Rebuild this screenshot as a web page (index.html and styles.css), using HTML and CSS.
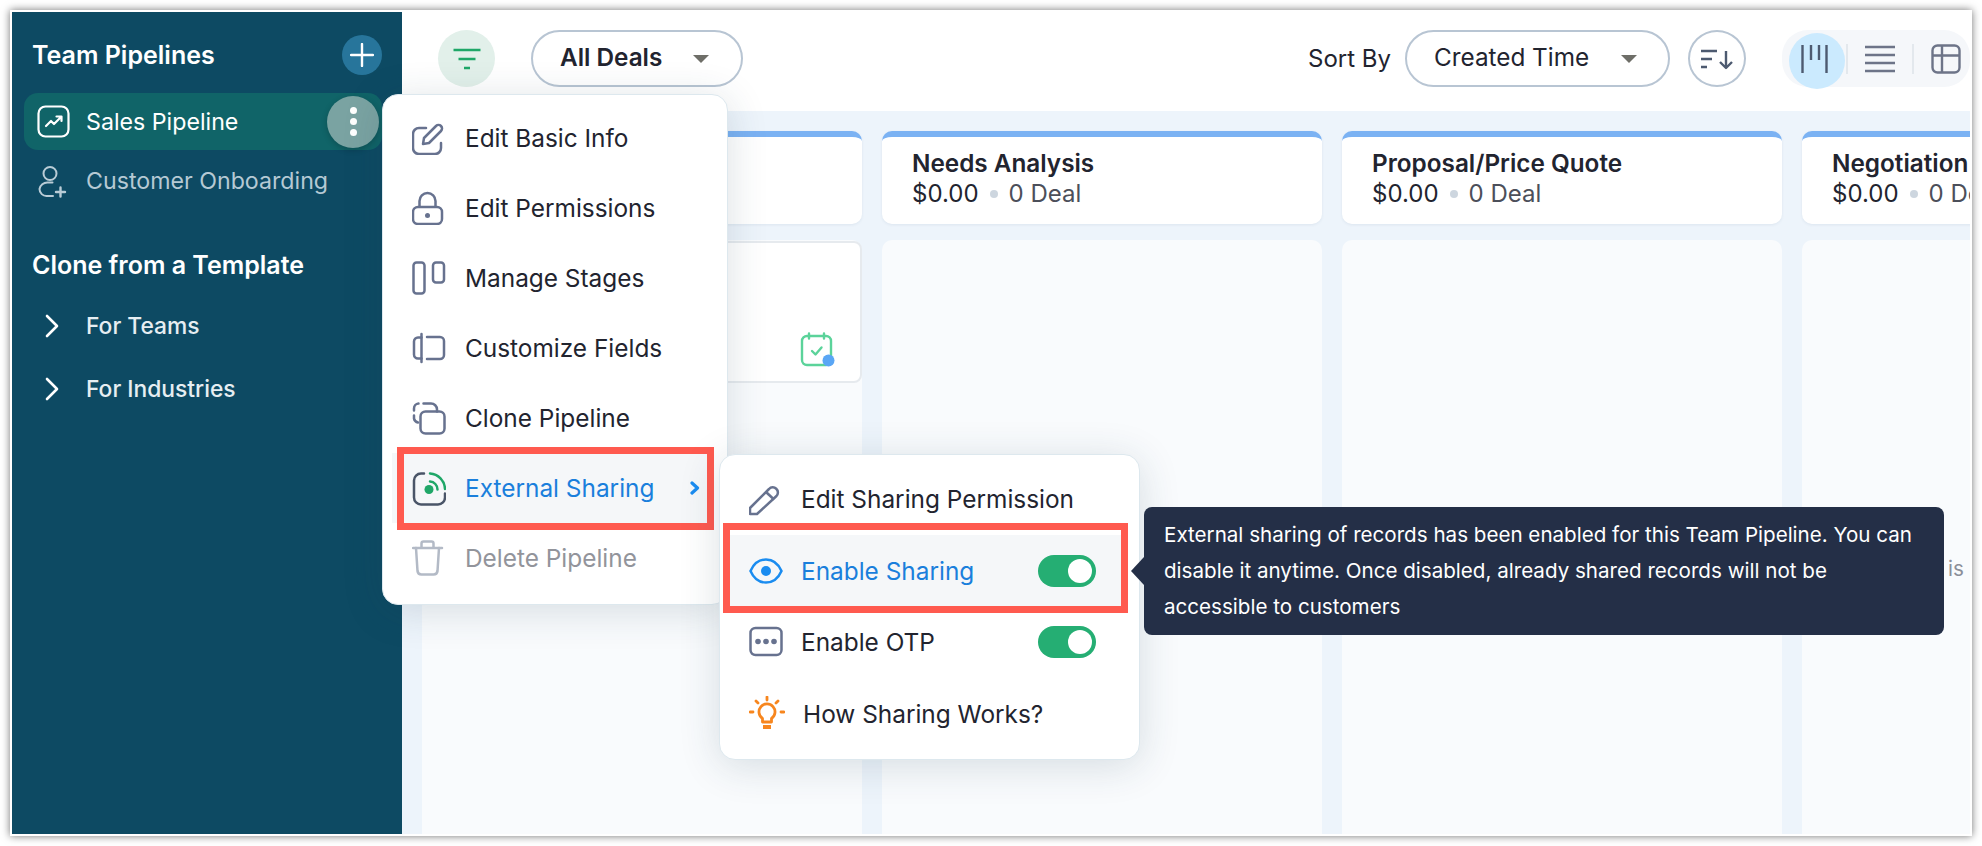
FILE: index.html

```html
<!DOCTYPE html>
<html lang="en">
<head>
    <meta charset="UTF-8">
    <title>Team Pipelines</title>
    <link rel="stylesheet" href="styles.css">
</head>
<body>

    <div class="window">
        <aside class="sidebar">
            <div class="side-head">
                <h2>Team Pipelines</h2>
                <span class="add-btn">
                    <svg width="24" height="24" viewBox="0 0 24 24"><path d="M12 1v22M1 12h22" stroke="#fff" stroke-width="2.4" stroke-linecap="round"/></svg>
                </span>
            </div>
            <div class="pipe-row active">
                <svg class="pipe-icon" width="33" height="33" viewBox="0 0 33 33" fill="none" stroke="#fff" stroke-width="2.2" stroke-linecap="round" stroke-linejoin="round"><rect x="1.5" y="1.5" width="30" height="30" rx="7"/><path d="M9 21l5-5 3 3 7-7M19.5 11.5H24.5V16"/></svg>
                <span>Sales Pipeline</span>
                <span class="kebab"><i></i><i></i><i></i></span>
            </div>
            <div class="pipe-row muted">
                <svg class="pipe-icon" width="33" height="33" viewBox="0 0 33 33" fill="none" stroke="#b9ccd6" stroke-width="2" stroke-linecap="round"><circle cx="13" cy="8.5" r="6.5"/><path d="M16 31H10a7 7 0 0 1-7.5-7 8 8 0 0 1 8-6.5h5"/><path d="M19 27h9M23.5 22.5v9" stroke-width="2.4"/></svg>
                <span>Customer Onboarding</span>
            </div>

            <div class="side-head second">
                <h2>Clone from a Template</h2>
            </div>
            <div class="tree-row">
                <svg width="33" height="24" viewBox="0 0 33 24" fill="none" stroke="#fff" stroke-width="2.6" stroke-linecap="round" stroke-linejoin="round"><path d="M10 2l10 10-10 10"/></svg>
                <span>For Teams</span>
            </div>
            <div class="tree-row">
                <svg width="33" height="24" viewBox="0 0 33 24" fill="none" stroke="#fff" stroke-width="2.6" stroke-linecap="round" stroke-linejoin="round"><path d="M10 2l10 10-10 10"/></svg>
                <span>For Industries</span>
            </div>
        </aside>

        <main class="main">
            <div class="toolbar">
                <span class="filter-btn">
                    <svg width="28" height="22" viewBox="0 0 28 22" fill="none" stroke="#1fa768" stroke-width="2.6"><path d="M0.5 2h27M5.5 11h17M11 20h6"/></svg>
                </span>
                <div class="pill deals-pill"><b>All Deals</b><i class="caret"></i></div>
                <div class="toolbar-right">
                    <span class="sort-label">Sort By</span>
                    <div class="pill sort-pill"><span>Created Time</span><i class="caret"></i></div>
                    <span class="sort-btn">
                        <svg width="32" height="22" viewBox="0 0 32 22" fill="none" stroke="#4d5a70" stroke-width="2.4"><path d="M0 3h16M0 11h11M0 19h6"/><path d="M25 3v17M19 14l6 6 6-6" stroke-linejoin="round"/></svg>
                    </span>
                    <div class="views">
                        <span class="view selected">
                            <svg width="27" height="30" viewBox="0 0 27 30" fill="none" stroke="#4d5a70" stroke-width="2.4"><path d="M1.5 1v28M10 1v15M18 1v15M25.5 1v28"/></svg>
                        </span>
                        <i class="view-sep"></i>
                        <span class="view">
                            <svg width="30" height="28" viewBox="0 0 30 28" fill="none" stroke="#6d7488" stroke-width="2.4"><path d="M0 2h30M0 10h30M0 18h30M0 26h30"/></svg>
                        </span>
                        <i class="view-sep"></i>
                        <span class="view">
                            <svg width="30" height="30" viewBox="0 0 30 30" fill="none" stroke="#6d7488" stroke-width="2.4"><rect x="1.5" y="1.5" width="27" height="27" rx="5"/><path d="M1.5 11.5h27M11 1.5v27"/></svg>
                        </span>
                    </div>
                </div>
            </div>

            <div class="board">
                <section class="col">
                    <div class="col-head"></div>
                    <div class="col-body">
                        <div class="deal-card">
                            <svg width="36" height="36" viewBox="0 0 36 36" fill="none" stroke="#5bd39a" stroke-width="2.4" stroke-linecap="round" stroke-linejoin="round"><rect x="2" y="4" width="29" height="29" rx="5"/><path d="M9 1.5v5M24 1.5v5M12 19l3.5 3.5 6-7"/><circle cx="28.5" cy="28.5" r="6" fill="#5aa6f5" stroke="none"/></svg>
                        </div>
                    </div>
                </section>
                <section class="col">
                    <div class="col-head">
                        <h3>Needs Analysis</h3>
                        <p><span>$0.00</span><i class="dot"></i><em>0 Deal</em></p>
                    </div>
                    <div class="col-body"></div>
                </section>
                <section class="col">
                    <div class="col-head">
                        <h3>Proposal/Price Quote</h3>
                        <p><span>$0.00</span><i class="dot"></i><em>0 Deal</em></p>
                    </div>
                    <div class="col-body"></div>
                </section>
                <section class="col">
                    <div class="col-head">
                        <h3>Negotiation</h3>
                        <p><span>$0.00</span><i class="dot"></i><em>0 Deal</em></p>
                    </div>
                    <div class="col-body"><div class="empty-note">is stage</div></div>
                </section>
            </div>
        </main>

        <!-- menu of the pipeline -->
        <div class="menu">
            <div class="menu-item">
                <svg width="34" height="34" viewBox="0 0 34 34" fill="none" stroke="#67728f" stroke-width="2.5" stroke-linecap="round" stroke-linejoin="round"><path d="M14 7H7a6 6 0 0 0-6 6v14a6 6 0 0 0 6 6h16a6 6 0 0 0 6-6v-5"/><path d="M11 23l1-6L24 5a3.5 3.5 0 0 1 5 5L17 22z"/></svg>
                <span>Edit Basic Info</span>
            </div>
            <div class="menu-item">
                <svg width="34" height="34" viewBox="0 0 34 34" fill="none" stroke="#67728f" stroke-width="2.5"><rect x="1" y="16" width="29" height="17" rx="5"/><path d="M7.5 16V10a8 8 0 0 1 16 0v6"/><circle cx="15.5" cy="24.5" r="2.5" fill="#67728f" stroke="none"/></svg>
                <span>Edit Permissions</span>
            </div>
            <div class="menu-item">
                <svg width="34" height="34" viewBox="0 0 34 34" fill="none" stroke="#67728f" stroke-width="2.5"><rect x="1.5" y="1.5" width="11" height="31" rx="3"/><rect x="21" y="1.5" width="11" height="20" rx="3"/></svg>
                <span>Manage Stages</span>
            </div>
            <div class="menu-item">
                <svg width="34" height="34" viewBox="0 0 34 34" fill="none" stroke="#67728f" stroke-width="2.5" stroke-linecap="round"><path d="M9.5 3v28"/><path d="M9.5 6.5H6a4 4 0 0 0-4 4v13a4 4 0 0 0 4 4h3.5"/><path d="M15 6h13a4 4 0 0 1 4 4v14a4 4 0 0 1-4 4H15"/></svg>
                <span>Customize Fields</span>
            </div>
            <div class="menu-item">
                <svg width="34" height="34" viewBox="0 0 34 34" fill="none" stroke="#67728f" stroke-width="2.5" stroke-linecap="round"><rect x="8.5" y="10.5" width="24" height="22" rx="5"/><path d="M11.5 2.5H19a6 6 0 0 1 6 6v2"/><path d="M6.5 2.5A5 5 0 0 0 2 7.5v2M2 14.5v3a5 5 0 0 0 4 4"/></svg>
                <span>Clone Pipeline</span>
            </div>
            <div class="menu-item sharing marked">
                <svg width="34" height="36" viewBox="0 0 34 36" fill="none" stroke-width="2.5" stroke-linecap="round"><path d="M12 3.5H9a7 7 0 0 0-7 7v17a7 7 0 0 0 7 7h17a7 7 0 0 0 7-7v-4" stroke="#4a5568"/><path d="M18 11.5a8 8 0 0 1 7.5 8M18 3.5a16 16 0 0 1 15 15.5" stroke="#1fa768"/><circle cx="17" cy="19.5" r="4.5" fill="#1fa768" stroke="none"/></svg>
                <span>External Sharing</span>
                <svg class="chevron" width="10" height="14" viewBox="0 0 10 14" fill="none" stroke="#1a8cf0" stroke-width="3.2" stroke-linecap="round" stroke-linejoin="round"><path d="M2 2l5.500 5L2 12"/></svg>
            </div>
            <div class="menu-item disabled">
                <svg width="34" height="36" viewBox="0 0 34 36" fill="none" stroke="#b3bac6" stroke-width="2.5" stroke-linecap="round" stroke-linejoin="round"><path d="M1 8h29M9.5 8V3.5a2 2 0 0 1 2-2h8a2 2 0 0 1 2 2V8"/><path d="M4 8l1.5 23a4 4 0 0 0 4 3.5h12a4 4 0 0 0 4-3.5L27 8"/></svg>
                <span>Delete Pipeline</span>
            </div>
        </div>

        <!-- submenu of External Sharing -->
        <div class="submenu">
            <div class="sub-item">
                <svg width="34" height="34" viewBox="0 0 34 34" fill="none" stroke="#67728f" stroke-width="2.5" stroke-linejoin="round"><path d="M1 32v-6L20 7a5 5 0 0 1 7.5 7L8 32z"/><path d="M17 10l8 7.5"/></svg>
                <span>Edit Sharing Permission</span>
            </div>
            <div class="sub-item active marked">
                <svg width="34" height="34" viewBox="0 0 34 34" fill="none" stroke="#1a8cf0" stroke-width="2.5"><path d="M1.5 17C5 9 10 5.5 17 5.5S29 9 32.5 17C29 25 24 28.5 17 28.5S5 25 1.5 17z"/><circle cx="17" cy="17" r="5" fill="#1a8cf0" stroke="none"/></svg>
                <span>Enable Sharing</span>
                <i class="toggle"></i>
            </div>
            <div class="sub-item">
                <svg width="34" height="34" viewBox="0 0 34 34" fill="none" stroke="#67728f" stroke-width="2.5"><rect x="1.5" y="3" width="31" height="27" rx="5"/><g fill="#67728f" stroke="none"><circle cx="9" cy="16.5" r="2.8"/><circle cx="17" cy="16.5" r="2.8"/><circle cx="25" cy="16.5" r="2.8"/></g></svg>
                <span>Enable OTP</span>
                <i class="toggle"></i>
            </div>
            <div class="sub-item">
                <svg width="36" height="36" viewBox="0 0 36 36" fill="none" stroke="#f7861e" stroke-width="2.8" stroke-linecap="round"><path d="M13.5 26v-3.5a8 8 0 1 1 9 0V26z" stroke-linejoin="round"/><path d="M14 31h8" stroke-width="4" stroke-linecap="butt"/><path d="M18 1v3M7 5l2 2M29 5l-2 2M1 16h3M32 16h3"/></svg>
                <span>How Sharing Works?</span>
            </div>
        </div>

        <div class="tooltip">External sharing of records has been enabled for this Team Pipeline. You can disable it anytime. Once disabled, already shared records will not be accessible to customers</div>
    </div>

</body>
</html>
```

FILE: styles.css

```css
* {
    box-sizing: border-box;
}
html, body {
    margin: 0;
    height: 100%;
    background-color: #fff;
    overflow: hidden;
}
body {
    padding: 10px;
    font-family: Inter, "Liberation Sans", sans-serif;
    color: #22242f;
}
h2, h3, p {
    margin: 0;
}
i, em {
    font-style: normal;
}

.window {
    position: relative;
    display: flex;
    width: 1962px;
    height: 826px;
    border: 2px solid #fff;
    box-shadow: 0 0 8px rgba(0, 0, 0, 0.55);
    overflow: hidden;
    background-color: #fff;
}

/* sidebar */
.sidebar {
    flex: none;
    width: 390px;
    padding: 23px 20px 0 12px;
    background-color: #0d4a63;
    color: #fff;
}
.side-head {
    display: flex;
    align-items: center;
    justify-content: space-between;
    height: 40px;
    padding-left: 8px;
}
.side-head.second {
    margin-top: 33px;
}
.side-head h2 {
    font-size: 25px;
    font-weight: 600;
}
.add-btn {
    display: flex;
    align-items: center;
    justify-content: center;
    width: 40px;
    height: 40px;
    border-radius: 50%;
    background-color: #27759b;
}
.pipe-row {
    display: flex;
    align-items: center;
    height: 62px;
    padding-left: 13px;
    font-size: 23.2px;
}
.pipe-row.active {
    height: 57px;
    margin-top: 18px;
    border-radius: 14px;
    background-color: #106468;
}
.pipe-row.muted {
    color: #b5c9d4;
}
.pipe-icon {
    margin-right: 16px;
}
.kebab {
    display: flex;
    flex-direction: column;
    align-items: center;
    justify-content: center;
    gap: 4px;
    width: 52px;
    height: 52px;
    margin-left: auto;
    margin-right: 3px;
    border-radius: 50%;
    background-color: #7aa3a2;
    box-shadow: 0 2px 6px rgba(0, 0, 0, 0.2);
}
.kebab i {
    width: 7px;
    height: 7px;
    border-radius: 50%;
    background-color: #fff;
}
.tree-row {
    display: flex;
    align-items: center;
    height: 63px;
    padding-left: 13px;
    font-size: 22.8px;
    font-weight: 500;
    color: #e6eef2;
}
.side-head.second + .tree-row {
    margin-top: 9px;
}
.tree-row svg {
    margin-right: 16px;
}

/* main area */
.main {
    flex: 1;
    min-width: 0;
    display: flex;
    flex-direction: column;
}
.toolbar {
    flex: none;
    display: flex;
    align-items: center;
    height: 99px;
    padding: 0 0 6px 36px;
    background-color: #fff;
}
.filter-btn {
    display: flex;
    align-items: center;
    justify-content: center;
    width: 57px;
    height: 57px;
    margin-right: 36px;
    border-radius: 50%;
    background-color: #e2f0ea;
}
.pill {
    display: flex;
    align-items: center;
    justify-content: space-between;
    height: 57px;
    border: 2px solid #b8c5d3;
    border-radius: 29px;
    background-color: #fff;
    font-size: 24.3px;
}
.pill b,
.pill span {
    padding-bottom: 4px;
}
.deals-pill {
    width: 212px;
    padding: 0 32px 0 27px;
}
.deals-pill b {
    font-weight: 600;
}
.sort-pill {
    width: 265px;
    padding: 0 31px 0 27px;
}
.caret {
    width: 0;
    height: 0;
    border-left: 8px solid transparent;
    border-right: 8px solid transparent;
    border-top: 8px solid #6e6e68;
}
.toolbar-right {
    display: flex;
    align-items: center;
    margin-left: auto;
}
.sort-label {
    font-size: 24px;
    margin-right: 14px;
}
.sort-btn {
    display: flex;
    align-items: center;
    justify-content: center;
    width: 58px;
    height: 57px;
    margin-left: 18px;
    margin-right: 36px;
    border: 2px solid #b8c5d3;
    border-radius: 50%;
}
.views {
    display: flex;
    align-items: center;
    width: 188px;
    height: 57px;
    padding-left: 7px;
    border-radius: 26px;
    background-color: #f5f7fa;
}
.view {
    display: flex;
    align-items: center;
    justify-content: center;
    flex: none;
    width: 63px;
}
.view.selected {
    width: 56px;
    height: 56px;
    margin-top: 5px;
    border-radius: 50%;
    background-color: #cbeafe;
}
.view.selected svg {
    margin: -5px 5px 0 0;
}
.view-sep {
    flex: none;
    width: 2px;
    height: 30px;
    margin-left: 1px;
    background-color: #e3e8ed;
}

/* board */
.board {
    flex: 1;
    display: flex;
    gap: 20px;
    padding: 20px 0 0 20px;
    background-color: #edf4fb;
    overflow: hidden;
}
.col {
    flex: none;
    display: flex;
    flex-direction: column;
    gap: 16px;
    width: 440px;
}
.col-head {
    flex: none;
    height: 93px;
    padding: 12px 30px 0;
    border-top: 6px solid #7bb2f3;
    border-radius: 10px;
    background-color: #fff;
    box-shadow: 0 1px 3px rgba(40, 70, 100, 0.08);
}
.col-head h3 {
    font-size: 24.3px;
    font-weight: 600;
    line-height: 28px;
    white-space: nowrap;
}
.col-head p {
    display: flex;
    align-items: center;
    margin-top: 3px;
    font-size: 24px;
    line-height: 28px;
    white-space: nowrap;
}
.col-head em {
    color: #4c4f5a;
}
.dot {
    width: 8px;
    height: 8px;
    margin: 0 11px;
    border-radius: 50%;
    background-color: #cdd6df;
}
.col-body {
    flex: 1;
    border-radius: 10px 10px 0 0;
    background-color: #f9fbfd;
}
.deal-card {
    display: flex;
    align-items: flex-end;
    justify-content: flex-end;
    height: 142px;
    margin-top: 1px;
    padding: 0 24px 13px 0;
    border: 2px solid #e6eaee;
    border-radius: 8px;
    background-color: #fff;
}
.empty-note {
    padding: 316px 0 0 146px;
    font-size: 20.6px;
    line-height: 26px;
    color: #8b8f99;
    white-space: nowrap;
}

/* popup menus */
.menu,
.submenu {
    position: absolute;
    border: 1px solid #dde8ee;
    border-radius: 16px;
    background-color: #fff;
    box-shadow: 0 6px 40px rgba(30, 60, 80, 0.16);
    font-size: 24.4px;
}
.menu {
    left: 370px;
    top: 82px;
    width: 346px;
    height: 511px;
    padding-top: 8px;
}
.menu-item {
    position: relative;
    display: flex;
    align-items: center;
    gap: 19px;
    height: 70px;
    padding-left: 29px;
}
.menu-item.sharing {
    margin: 0 13px 0 9px;
    padding-left: 20px;
    background-color: #f5f7f9;
    color: #1a7fdc;
}
.menu-item.disabled {
    color: #92949b;
}
.chevron {
    margin-left: auto;
    margin-right: 14px;
}
.marked::after {
    content: "";
    position: absolute;
    border: 7px solid #ff5a4f;
}
.menu-item.marked::after {
    top: -6px;
    right: 0;
    bottom: -7px;
    left: 5px;
}
.submenu {
    left: 707px;
    top: 442px;
    width: 421px;
    height: 306px;
    padding-top: 8px;
}
.sub-item {
    position: relative;
    display: flex;
    align-items: center;
    gap: 18px;
    height: 71.7px;
    margin: 0 17px 0 10px;
    padding: 0 26px 0 19px;
}
.sub-item.active {
    background-color: #f5f7f9;
    color: #1a7fdc;
}
.sub-item.marked::after {
    top: -12px;
    right: -6px;
    bottom: -7px;
    left: -7px;
}
.toggle {
    position: relative;
    width: 58px;
    height: 32px;
    margin-left: auto;
    border-radius: 16px;
    background-color: #25ae73;
}
.toggle::after {
    content: "";
    position: absolute;
    top: 4px;
    right: 4px;
    width: 24px;
    height: 24px;
    border-radius: 50%;
    background-color: #fff;
}
.tooltip {
    position: absolute;
    left: 1132px;
    top: 495px;
    width: 800px;
    height: 128px;
    padding: 10px 20px 0 20px;
    border-radius: 8px;
    background-color: #242f47;
    color: #fff;
    font-size: 20.6px;
    line-height: 36px;
}
.tooltip::before {
    content: "";
    position: absolute;
    left: -13px;
    top: 50px;
    border-top: 14px solid transparent;
    border-bottom: 14px solid transparent;
    border-right: 13px solid #242f47;
}
```
